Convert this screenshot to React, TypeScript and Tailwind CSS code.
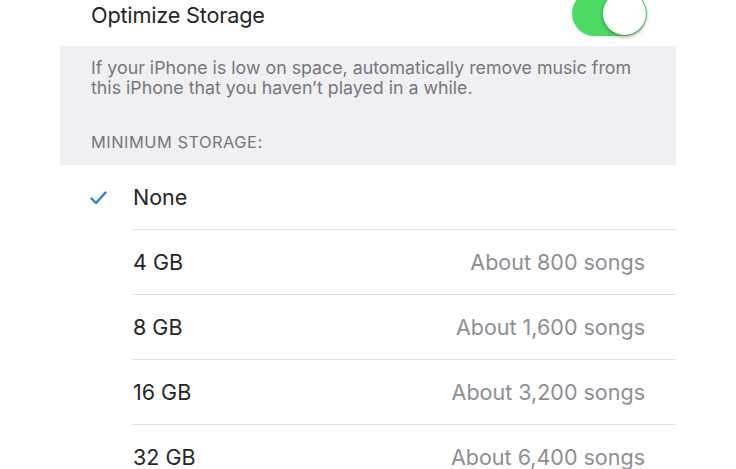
import React from "react";

const options = [
  { label: "None", detail: "", selected: true },
  { label: "4 GB", detail: "About 800 songs" },
  { label: "8 GB", detail: "About 1,600 songs" },
  { label: "16 GB", detail: "About 3,200 songs" },
  { label: "32 GB", detail: "About 6,400 songs" },
];

function Check() {
  return (
    <svg width="17" height="14" viewBox="0 0 17 14" fill="none">
      <path d="M1.5 7.5 L6 12 L15.5 1.5" stroke="#2c7fd3" strokeWidth="2.4" strokeLinecap="round" strokeLinejoin="round" />
    </svg>
  );
}

export default function App() {
  return (
    <div className="w-[736px] h-[469px] overflow-hidden bg-white font-['Inter','Liberation_Sans',sans-serif]">
      <div className="mx-[60px]">
        {/* Toggle row */}
        <div className="flex items-center justify-between h-[66px] -mt-[20px] pl-[31px] pr-[29px]">
          <span className="pt-[4px] text-[21.7px] text-[#262626] tracking-[-0.2px]">Optimize Storage</span>
          <div className="flex justify-end items-center w-[75px] h-[45px] rounded-full bg-[#4cd964] p-[1px] shadow-[0_1px_2px_rgba(0,0,0,0.1)]">
            <div className="w-[43px] h-[43px] rounded-full bg-white shadow-[0_2px_4px_rgba(0,0,0,0.3)]" />
          </div>
        </div>

        {/* Footer / header group */}
        <div className="bg-[#efeff4] pl-[31px] pr-[38px] pt-[12px] h-[119px]">
          <p className="text-[17.8px] leading-[20px] text-[#77777c]">
            If your iPhone is low on space, automatically remove music from this iPhone that you haven’t played in a while.
          </p>
          <p className="mt-[32px] text-[16.4px] text-[#77777c] uppercase tracking-[0.5px]">Minimum Storage:</p>
        </div>

        {/* Options list */}
        <div>
          {options.map((o, i) => (
            <div key={o.label} className="flex items-stretch h-[65px]">
              <div className="w-[73px] flex items-center pl-[30px]">{o.selected && <Check />}</div>
              <div className={"flex-1 flex items-center justify-between pr-[31px] " + (i < options.length - 1 ? "border-b border-[#e2e2e6]" : "")}>
                <span className="text-[21.5px] text-[#262626]">{o.label}</span>
                <span className="text-[21.5px] text-[#8e8e93]">{o.detail}</span>
              </div>
            </div>
          ))}
        </div>
      </div>
    </div>
  );
}
